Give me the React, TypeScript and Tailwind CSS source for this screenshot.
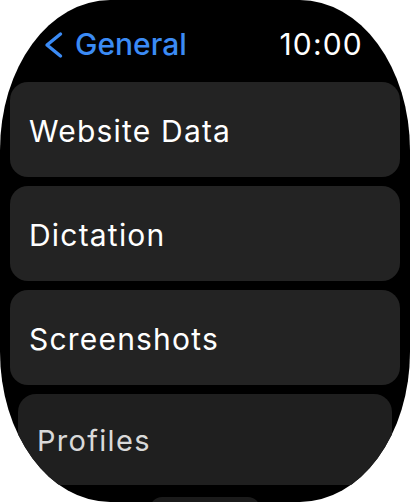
export default function App() {
  const rows = ['Website Data', 'Dictation', 'Screenshots'];

  return (
    <div className="w-[410px] h-[502px] bg-white overflow-hidden font-['Inter',sans-serif]">
      <div className="w-full h-full bg-black rounded-[110px/150px] overflow-hidden flex flex-col">
        <div className="flex items-center justify-between pt-[26px] pl-[43px] pr-[47px] h-[62px]">
          <div className="flex items-center gap-[12px]">
            <svg width="20" height="28" viewBox="0 0 20 28" className="mt-[1px]">
              <polyline
                points="17.5,3 4,14 17.5,25"
                fill="none"
                stroke="#3b8bf5"
                strokeWidth="3.4"
                strokeLinecap="round"
                strokeLinejoin="round"
              />
            </svg>
            <span className="text-[30px] leading-[36px] font-medium text-[#3b8bf5]">General</span>
          </div>
          <span className="text-[30px] leading-[36px] tracking-[1.2px] text-white">10:00</span>
        </div>
        <div className="mt-[12px] mx-[25px] h-px bg-[#1f1f1f]" />
        <div className="mt-[8px] flex flex-col gap-[9px]">
          {rows.map((r) => (
            <div key={r} className="mx-[10px] h-[95px] rounded-[18px] bg-[#232323] flex items-center px-[19px]">
              <span className="text-[30px] leading-[36px] tracking-[1.2px] text-white mt-[3px]">{r}</span>
            </div>
          ))}
          <div className="mx-[18px] h-[91px] rounded-[18px] bg-[#1f1f1f] flex items-center px-[19px]">
            <span className="text-[29px] leading-[36px] tracking-[1.3px] text-[#d9d9d9] mt-[3px]">Profiles</span>
          </div>
          <div className="mt-[3px] mx-auto w-[110px] h-[40px] rounded-[12px] bg-[#1b1b1b]" />
        </div>
      </div>
    </div>
  );
}
